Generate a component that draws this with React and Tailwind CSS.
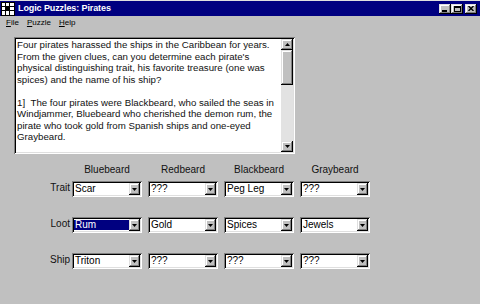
import React from "react";

const sunken =
  "shadow-[inset_1px_1px_0_#808080,inset_-1px_-1px_0_#ffffff,inset_2px_2px_0_#000000,inset_-2px_-2px_0_#dfdfdf]";
const raised =
  "shadow-[inset_-1px_-1px_0_#000000,inset_1px_1px_0_#dfdfdf,inset_-2px_-2px_0_#808080,inset_2px_2px_0_#ffffff]";

function Arrow({ up }) {
  return (
    <svg width="5" height="3" viewBox="0 0 5 3" className="block">
      {up ? (
        <path d="M2.5 0 L5 3 L0 3 Z" fill="#000" />
      ) : (
        <path d="M0 0 L5 0 L2.5 3 Z" fill="#000" />
      )}
    </svg>
  );
}

function Combo({ value, selected }) {
  return (
    <div className={`flex h-[16px] w-[70px] bg-white ${sunken}`}>
      <div className="flex-1 pl-[2px] pt-[2px] overflow-hidden">
        {selected ? (
          <div className="mt-[1px] h-[10px] bg-[#000080] pl-[1px] text-[10px] leading-[10px] text-white">
            {value}
          </div>
        ) : (
          <div className="pl-[1px] text-[10px] leading-[12px] text-black">{value}</div>
        )}
      </div>
      <div
        className={`mt-[2px] mr-[2px] flex h-[12px] w-[11px] items-center justify-center bg-[#c0c0c0] ${raised}`}
      >
        <Arrow />
      </div>
    </div>
  );
}

const lines = [
  "Four pirates harassed the ships in the Caribbean for years.",
  "From the given clues, can you determine each pirate's",
  "physical distinguishing trait, his favorite treasure (one was",
  "spices) and the name of his ship?",
  "\u00a0",
  "1]\u00a0\u00a0The four pirates were Blackbeard, who sailed the seas in",
  "Windjammer, Bluebeard who cherished the demon rum, the",
  "pirate who took gold from Spanish ships and one-eyed",
  "Graybeard.",
];

const rows = [
  { label: "Trait", values: ["Scar", "???", "Peg Leg", "???"] },
  { label: "Loot", values: ["Rum", "Gold", "Spices", "Jewels"], sel: 0 },
  { label: "Ship", values: ["Triton", "???", "???", "???"] },
];

export default function App() {
  return (
    <div className="h-[304px] w-[480px] overflow-hidden border-t border-[#dfdfdf] bg-[#c0c0c0] font-['Liberation_Sans',Arial,sans-serif] text-black">
      {/* Title bar */}
      <div className="flex h-[15px] items-center bg-[#000080]">
        <svg width="14" height="14" viewBox="0 0 14 14" className="ml-[1px] block">
          <rect x="0" y="0" width="14" height="14" fill="#000" />
          <rect x="1" y="1" width="3" height="3" fill="#fff" />
          <rect x="5" y="1" width="3" height="3" fill="#fff" />
          <rect x="9" y="1" width="4" height="3" fill="#fff" />
          <rect x="1" y="5" width="3" height="3" fill="#fff" />
          <rect x="9" y="5" width="4" height="3" fill="#fff" />
          <rect x="1" y="9" width="3" height="4" fill="#fff" />
          <rect x="5" y="9" width="3" height="4" fill="#fff" />
          <rect x="9" y="9" width="4" height="4" fill="#fff" />
        </svg>
        <span className="ml-[3px] text-[9px] font-bold leading-[15px] tracking-[-0.1px] text-white">
          Logic Puzzles: Pirates
        </span>
        <div className="ml-auto mr-[3px] flex items-center">
          <div className={`flex h-[10px] w-[12px] items-end justify-start bg-[#c0c0c0] pb-[2px] pl-[3px] ${raised}`}>
            <div className="h-[2px] w-[5px] bg-black" />
          </div>
          <div className={`flex h-[10px] w-[12px] items-center justify-center bg-[#c0c0c0] ${raised}`}>
            <div className="h-[6px] w-[7px] border border-t-2 border-black" />
          </div>
          <div className={`ml-[2px] flex h-[10px] w-[12px] items-center justify-center bg-[#c0c0c0] ${raised}`}>
            <svg width="6" height="5" viewBox="0 0 6 5" className="block">
              <path d="M0.5 0 L5.5 5 M5.5 0 L0.5 5" stroke="#000" strokeWidth="1.4" />
            </svg>
          </div>
        </div>
      </div>

      {/* Menu bar */}
      <div className="flex h-[14px] items-center text-[8px] leading-[14px]">
        <span className="ml-[6px]">
          <span className="underline underline-offset-1">F</span>ile
        </span>
        <span className="ml-[8px]">
          <span className="underline underline-offset-1">P</span>uzzle
        </span>
        <span className="ml-[8px]">
          <span className="underline underline-offset-1">H</span>elp
        </span>
      </div>

      {/* Text box */}
      <div className={`ml-[14px] mt-[7px] flex h-[117px] w-[281px] bg-white p-[2px] ${sunken}`}>
        <div className="flex-1 overflow-hidden pl-[1px] text-[9.7px] leading-[11.5px] text-[#111]">
          {lines.map((l, i) => (
            <div key={i} className="whitespace-pre">
              {l}
            </div>
          ))}
        </div>
        <div className="flex w-[12px] flex-col">
          <div className={`flex h-[11px] items-center justify-center bg-[#c0c0c0] ${raised}`}>
            <Arrow up />
          </div>
          <div className={`h-[35px] bg-[#c0c0c0] ${raised}`} />
          <div className="flex-1 bg-[#e2e2e2]" />
          <div className={`flex h-[11px] items-center justify-center bg-[#c0c0c0] ${raised}`}>
            <Arrow />
          </div>
        </div>
      </div>

      {/* Grid */}
      <div className="mt-[10px] flex flex-col text-[10px]">
        <div className="flex gap-[6px] pl-[72px]">
          {["Bluebeard", "Redbeard", "Blackbeard", "Graybeard"].map((h) => (
            <div key={h} className="w-[70px] text-center leading-[12px] text-[#111]">
              {h}
            </div>
          ))}
        </div>
        {rows.map((r, i) => (
          <div key={r.label} className={`flex items-start ${i === 0 ? "mt-[5px]" : "mt-[20px]"}`}>
            <div className="w-[70px] pt-[1px] text-right leading-[12px] text-[#111]">{r.label}</div>
            <div className="ml-[2px] flex gap-[6px]">
              {r.values.map((v, j) => (
                <Combo key={j} value={v} selected={r.sel === j} />
              ))}
            </div>
          </div>
        ))}
      </div>
    </div>
  );
}
